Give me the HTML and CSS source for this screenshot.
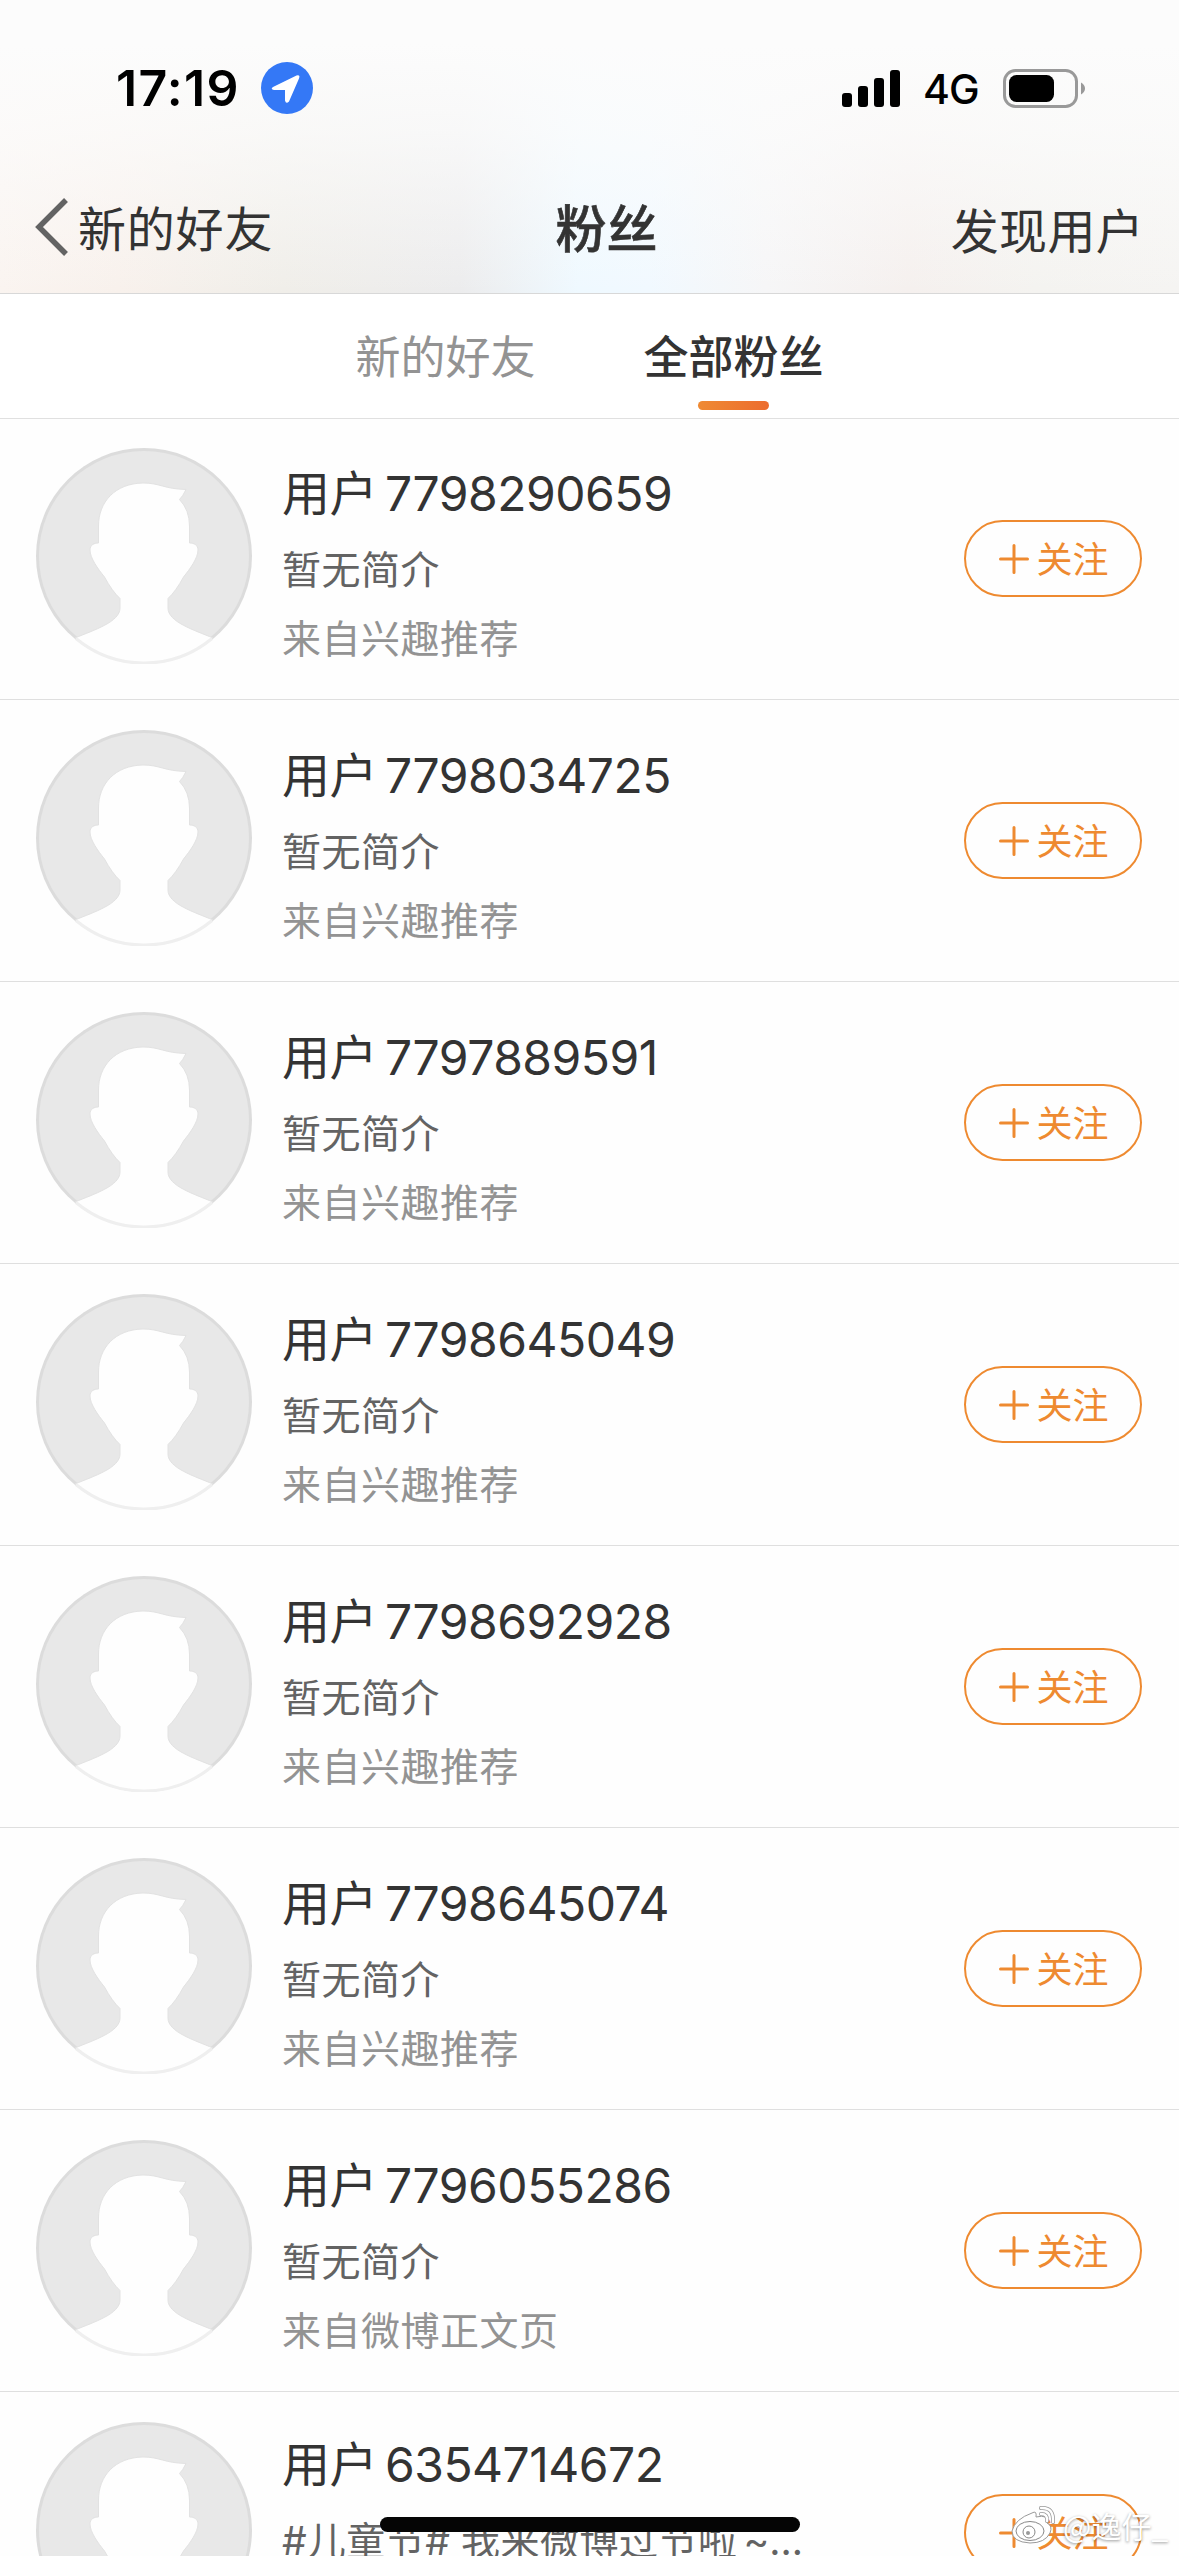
FILE: index.html
```html
<!DOCTYPE html>
<html lang="zh-CN">
<head>
<meta charset="utf-8">
<title>粉丝</title>
<link rel="stylesheet" href="styles.css">
</head>
<body>
<svg class="defs" width="0" height="0" aria-hidden="true">
  <symbol id="avatar" viewBox="0 0 216 216">
    <circle cx="108" cy="108" r="108" fill="#dcdcdc"/>
    <circle cx="108" cy="108" r="105" fill="#e8e8e8"/>
    <path d="M39 190C58 182 84 174 84 160V150.500Q76 143 68.500 129C62 121 54 110 54 102C54 97 58 95 62.500 95V78C62.500 54 79 35.500 107 35C124 35 128 41 150 41.500Q147 48 143.500 51.500Q153.500 62 153.500 78V95C158 95 162 97 162 102C162 110 154 121 147.500 129Q140 143 132 150.500V160C132 174 158 182 177 190A108 108 0 0 1 39 190Z" fill="#fefefe" stroke="#e2e2e2" stroke-width="1"/>
    <path d="M40 190.500A106.500 106.500 0 0 0 176 190.500" fill="none" stroke="#efefef" stroke-width="3"/>
  </symbol>
  <symbol id="plus" viewBox="0 0 30 30">
    <path d="M15 1.500V28.500M1.500 15H28.500" fill="none" stroke="#ee8a30" stroke-width="3" stroke-linecap="round"/>
  </symbol>
</svg>
<div class="screen">
  <header class="top">
    <div class="status">
      <span class="time">17:19</span>
      <svg class="location" viewBox="0 0 52 52"><circle cx="26" cy="26" r="26" fill="#3478f6"/><path d="M12 25L35.500 13.500Q39.500 12.500 38 16.500L28 39.500Q25 42.500 24 38.500V28H13Q9 27 12 25Z" fill="#fff"/></svg>
      <svg class="signal" viewBox="0 0 58 37"><rect y="23" width="10" height="14" rx="3"/><rect x="16" y="16" width="10" height="21" rx="3"/><rect x="32" y="8" width="10" height="29" rx="3"/><rect x="48" width="10" height="37" rx="3"/></svg>
      <span class="network">4G</span>
      <svg class="battery" viewBox="0 0 82 39"><rect x="1.500" y="1.500" width="72" height="36" rx="11" fill="none" stroke="#999" stroke-width="3"/><rect x="6" y="6" width="45" height="27" rx="7.500"/><path d="M78 13.500Q82 16 82 19.500T78 25.500Z" fill="#999"/></svg>
    </div>
    <nav class="nav">
      <a class="back"><svg class="chevron" viewBox="0 0 34 58"><path d="M31 2L4 29L31 56" fill="none" stroke="#636363" stroke-width="5.500"/></svg>新的好友</a>
      <h1 class="title">粉丝</h1>
      <a class="discover">发现用户</a>
    </nav>
  </header>
  <div class="tabs">
    <span class="tab">新的好友</span>
    <span class="tab active">全部粉丝</span>
  </div>
  <main class="list">
    <div class="row"><svg class="avatar"><use href="#avatar"/></svg><div class="info"><div class="name">用户<span class="num">7798290659</span></div><div class="desc">暂无简介</div><div class="from">来自兴趣推荐</div></div><div class="follow"><svg class="plus"><use href="#plus"/></svg><span class="label">关注</span></div></div>
    <div class="row"><svg class="avatar"><use href="#avatar"/></svg><div class="info"><div class="name">用户<span class="num">7798034725</span></div><div class="desc">暂无简介</div><div class="from">来自兴趣推荐</div></div><div class="follow"><svg class="plus"><use href="#plus"/></svg><span class="label">关注</span></div></div>
    <div class="row"><svg class="avatar"><use href="#avatar"/></svg><div class="info"><div class="name">用户<span class="num">7797889591</span></div><div class="desc">暂无简介</div><div class="from">来自兴趣推荐</div></div><div class="follow"><svg class="plus"><use href="#plus"/></svg><span class="label">关注</span></div></div>
    <div class="row"><svg class="avatar"><use href="#avatar"/></svg><div class="info"><div class="name">用户<span class="num">7798645049</span></div><div class="desc">暂无简介</div><div class="from">来自兴趣推荐</div></div><div class="follow"><svg class="plus"><use href="#plus"/></svg><span class="label">关注</span></div></div>
    <div class="row"><svg class="avatar"><use href="#avatar"/></svg><div class="info"><div class="name">用户<span class="num">7798692928</span></div><div class="desc">暂无简介</div><div class="from">来自兴趣推荐</div></div><div class="follow"><svg class="plus"><use href="#plus"/></svg><span class="label">关注</span></div></div>
    <div class="row"><svg class="avatar"><use href="#avatar"/></svg><div class="info"><div class="name">用户<span class="num">7798645074</span></div><div class="desc">暂无简介</div><div class="from">来自兴趣推荐</div></div><div class="follow"><svg class="plus"><use href="#plus"/></svg><span class="label">关注</span></div></div>
    <div class="row"><svg class="avatar"><use href="#avatar"/></svg><div class="info"><div class="name">用户<span class="num">7796055286</span></div><div class="desc">暂无简介</div><div class="from">来自微博正文页</div></div><div class="follow"><svg class="plus"><use href="#plus"/></svg><span class="label">关注</span></div></div>
    <div class="row"><svg class="avatar"><use href="#avatar"/></svg><div class="info raised"><div class="name">用户<span class="num">6354714672</span></div><div class="desc"><span class="latin">#</span>儿童节<span class="latin"># </span>我来微博过节啦<span class="latin tail">~...</span></div></div><div class="follow"><svg class="plus"><use href="#plus"/></svg><span class="label">关注</span></div></div>
  </main>
  <div class="home-bar"></div>
  <div class="watermark"><svg class="weibo" viewBox="0 0 46 40"><path d="M21 8Q26 5 25 12Q38 9 36 18Q42 21 39 28Q34 38 19 38Q1 37 1 26Q4 14 21 8Z" fill="#fff" stroke="#999"/><ellipse cx="19" cy="26" rx="14" ry="9.500" fill="#fff" stroke="#888"/><circle cx="18" cy="27" r="6" fill="#fff" stroke="#888"/><circle cx="17" cy="28" r="2" fill="#999"/><path d="M30 3Q43 2 42 17M30 9Q37 9 36 16" fill="none" stroke="#999" stroke-width="4" stroke-linecap="round"/><path d="M30 3Q43 2 42 17M30 9Q37 9 36 16" fill="none" stroke="#fff" stroke-width="2.500" stroke-linecap="round"/></svg><span>@逸仔_</span></div>
</div>
</body>
</html>
```
FILE: styles.css
```css
* { box-sizing: border-box; }
body { margin: 0; background: #fff; font-family: Inter, "Noto Sans CJK SC", sans-serif; color: #333; }
svg { display: block; flex: none; }
.defs { position: absolute; }
.screen { position: relative; width: 1179px; height: 2556px; overflow: hidden; background: #fefefe; }
.top {
  height: 294px;
  border-bottom: 1px solid #d8d8d8;
  background:
    linear-gradient(to bottom, #fcfcfc 0%, #fcfcfc 15%, rgba(252,252,252,.75) 45%, rgba(252,252,252,0) 100%),
    linear-gradient(to right, #faf4f0 0%, #f8f1ec 10%, #f0eee9 24%, #ececed 39%, #eff9ff 49%, #f1f9ff 55%, #f6f6f7 65%, #f5f0ee 77%, #f4f3f0 88%, #f5f4f2 100%);
}
.status { display: flex; height: 176px; padding: 0 94px 0 116px; align-items: center; color: #000; }
.time { width: 145px; font-size: 50px; font-weight: 600; letter-spacing: 1.300px; }
.location { width: 52px; height: 52px; }
.signal { width: 58px; height: 37px; margin-left: auto; }
.network { width: 57px; margin: 2px 0 0 23px; font-size: 41px; font-weight: 500; letter-spacing: -1px; }
.battery { width: 82px; height: 39px; margin-left: 23px; }
.nav { display: grid; grid-template-columns: 1fr auto 1fr; align-items: center; height: 99px; padding: 0 35px; font-family: "Noto Sans CJK SC", sans-serif; font-size: 48px; line-height: 60px; letter-spacing: .8px; }
.back { display: flex; align-items: center; }
.chevron { width: 34px; height: 58px; margin: 3px 9px 0 0; }
.title { margin: 0; padding-left: 34px; font-size: 51px; font-weight: 500; letter-spacing: 0; -webkit-text-stroke: .6px #333; }
.discover { justify-self: end; letter-spacing: .3px; margin-top: 4px; }
.tabs { display: flex; justify-content: center; gap: 108px; height: 125px; border-bottom: 1px solid #e0e0e0; background: #fff; font-family: "Noto Sans CJK SC", sans-serif; font-size: 45px; line-height: 60px; padding-top: 31px; }
.tab { color: #939393; }
.active { display: flex; flex-direction: column; align-items: center; color: #333; font-weight: 500; }
.active::after { content: ""; width: 71px; height: 9px; margin-top: 16px; border-radius: 5px; background: linear-gradient(to right, #ef8a33, #ec6c2e); }
.list { margin-top: -1px; }
.row { display: flex; height: 282px; padding: 30px 37px 0 36px; border-bottom: 1px solid #dfdfdf; }
.avatar { width: 216px; height: 216px; }
.info { flex: 1; margin-left: 30px; padding-top: 11px; font-family: "Noto Sans CJK SC", sans-serif; white-space: nowrap; }
.raised { padding-top: 8px; }
.name { font-size: 48px; line-height: 62px; letter-spacing: -.5px; }
.num { margin-left: 8px; font-family: Inter, sans-serif; font-size: 48px; }
.desc, .from { font-size: 39px; line-height: 60px; letter-spacing: .5px; }
.desc { margin-top: 12px; color: #636363; }
.from { margin-top: 9px; color: #939393; }
.latin { font-family: Inter, sans-serif; line-height: 1; letter-spacing: 0; }
.tail { margin-left: 6px; }
.follow { display: flex; align-items: center; justify-content: center; width: 178px; height: 77px; margin-top: 72px; border: 2px solid #ee8a30; border-radius: 39px; color: #ee8a30; font-family: "Noto Sans CJK SC", sans-serif; font-size: 36px; line-height: 40px; padding-left: 2px; }
.plus { width: 30px; height: 30px; margin-right: 7px; }
.label { padding-bottom: 3px; }
.home-bar { position: absolute; left: 380px; top: 2517px; width: 420px; height: 15px; border-radius: 8px; background: #050505; }
.watermark { position: absolute; left: 1011px; top: 2502px; display: flex; align-items: center; gap: 6px; color: #fff; font: 30px/46px "Noto Sans CJK SC", sans-serif; text-shadow: 0 1px 3px rgba(0,0,0,.45); }
.weibo { width: 46px; height: 40px; }
```
